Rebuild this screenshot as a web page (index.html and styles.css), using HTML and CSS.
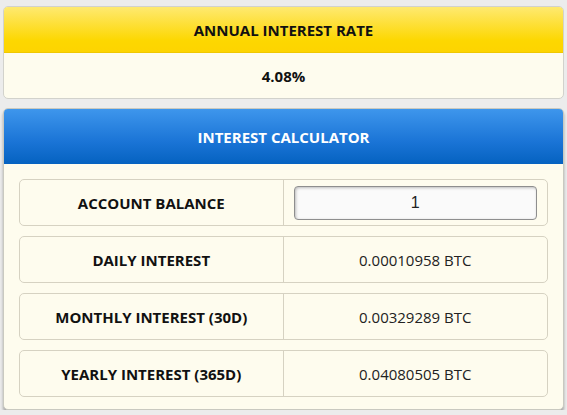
FILE: index.html
```html
<!DOCTYPE html>
<html>
<head>
<meta charset="utf-8">
<link rel="stylesheet" href="styles.css">
</head>
<body>
<div class="page">
  <section class="card card-rate">
    <div class="head head-yellow">ANNUAL INTEREST RATE</div>
    <div class="rate-body">4.08%</div>
  </section>
  <section class="card card-calc">
    <div class="head head-blue">INTEREST CALCULATOR</div>
    <div class="calc-body">
      <div class="row">
        <div class="cell label">ACCOUNT BALANCE</div>
        <div class="cell value input-cell"><input class="balance" type="text" value="1"></div>
      </div>
      <div class="row">
        <div class="cell label">DAILY INTEREST</div>
        <div class="cell value">0.00010958 BTC</div>
      </div>
      <div class="row">
        <div class="cell label">MONTHLY INTEREST (30D)</div>
        <div class="cell value">0.00329289 BTC</div>
      </div>
      <div class="row">
        <div class="cell label">YEARLY INTEREST (365D)</div>
        <div class="cell value">0.04080505 BTC</div>
      </div>
    </div>
  </section>
</div>
</body>
</html>
```
FILE: styles.css
```css
html, body {
  margin: 0;
  padding: 0;
  background: #ececec;
  font-family: "Open Sans", "Liberation Sans", sans-serif;
  color: #111;
}
.page {
  padding: 6px 3px 0 3px;
  display: flex;
  flex-direction: column;
  gap: 9px;
}
.card {
  border: 1px solid #d2d2cc;
  border-radius: 5px;
  background: #fefcee;
  overflow: hidden;
}
.card-calc {
  box-shadow: 0 3px 3px rgba(0,0,0,0.3);
  border-color: #c9c9c0;
}
.head {
  display: flex;
  align-items: center;
  justify-content: center;
  font-weight: 700;
  font-size: 15px;
}
.head-yellow {
  height: 45px;
  background: linear-gradient(#fee970, #fdd700 75%, #fdd400);
  border-bottom: 1px solid #f0c800;
  color: #111;
}
.rate-body {
  height: 45px;
  display: flex;
  align-items: center;
  justify-content: center;
  font-weight: 700;
  font-size: 15px;
}
.head-blue {
  height: 55px;
  background: linear-gradient(#3e96ec, #1a74d6 60%, #0562c0);
  color: #fff;
}
.calc-body {
  padding: 15px 15px 12px 15px;
  display: flex;
  flex-direction: column;
  gap: 10px;
}
.row {
  display: grid;
  grid-template-columns: 1fr 1fr;
  height: 45px;
  border: 1px solid #d6d2c2;
  border-radius: 5px;
}
.cell {
  display: flex;
  align-items: center;
  justify-content: center;
  font-size: 15px;
}
.label {
  font-weight: 700;
  border-right: 1px solid #d6d2c2;
}
.value {
  font-weight: 400;
  color: #222;
}
.input-cell {
  padding: 0 10px;
}
.balance {
  width: 100%;
  box-sizing: border-box;
  height: 34px;
  border: 1px solid #8e8e8e;
  border-radius: 4px;
  background: #fafafa;
  box-shadow: inset 1px 1px 3px rgba(0,0,0,0.25);
  text-align: center;
  font-family: "Liberation Sans", Arial, sans-serif;
  font-size: 16px;
  color: #222;
  padding: 0;
}
```
